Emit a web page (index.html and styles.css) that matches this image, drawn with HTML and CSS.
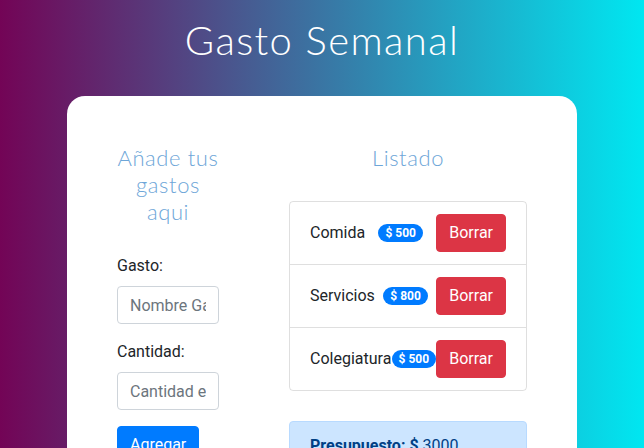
FILE: index.html
```html
<!DOCTYPE html>
<html lang="es">
<head>
<meta charset="utf-8">
<title>Gasto Semanal</title>
<link rel="stylesheet" href="styles.css">
</head>
<body>
<header class="top">
  <h1 class="title">Gasto Semanal</h1>
</header>
<main class="card">
  <div class="cols">
    <section class="form-col">
      <h2 class="sub">Añade tus gastos aqui</h2>
      <form class="form">
        <div class="group">
          <label class="label" for="gasto">Gasto:</label>
          <input class="control" id="gasto" type="text" placeholder="Nombre Gasto">
        </div>
        <div class="group">
          <label class="label" for="cantidad">Cantidad:</label>
          <input class="control" id="cantidad" type="text" placeholder="Cantidad en $">
        </div>
        <button class="btn btn-primary" type="button">Agregar</button>
      </form>
    </section>
    <section class="list-col">
      <h2 class="sub sub-list">Listado</h2>
      <ul class="list">
        <li class="item"><span class="name">Comida</span><span class="badge">$ 500</span><button class="btn btn-danger" type="button">Borrar</button></li>
        <li class="item"><span class="name">Servicios</span><span class="badge">$ 800</span><button class="btn btn-danger" type="button">Borrar</button></li>
        <li class="item"><span class="name">Colegiatura</span><span class="badge">$ 500</span><button class="btn btn-danger" type="button">Borrar</button></li>
      </ul>
      <div class="alert"><strong>Presupuesto: $</strong> 3000</div>
    </section>
  </div>
</main>
</body>
</html>
```

FILE: styles.css
```css
* { box-sizing: border-box; }

html, body { height: 100%; }

body {
  margin: 0;
  font-family: Roboto, "Liberation Sans", sans-serif;
  font-size: 16px;
  line-height: 1.5;
  color: #212529;
  background: linear-gradient(to right, #730456, #00e7f1);
  overflow: hidden;
}

.top {
  padding-top: 16px;
  margin-bottom: 32px;
  text-align: center;
}

.title {
  margin: 0;
  font-family: Lato, sans-serif;
  font-weight: 300;
  font-size: 40px;
  line-height: 48px;
  letter-spacing: 1.4px;
  color: #fff;
}

.card {
  width: 510px;
  margin: 0 auto;
  background: #fff;
  border-radius: 18px;
  padding: 48px 50px 40px;
  min-height: 400px;
}

.cols {
  display: flex;
  gap: 70px;
}

.form-col { width: 102px; flex: none; }
.list-col { width: 238px; flex: none; }

.sub {
  margin: 0 0 29px;
  font-family: Lato, sans-serif;
  font-weight: 300;
  font-size: 22px;
  line-height: 27px;
  letter-spacing: 0.6px;
  color: #6ea6d8;
  text-align: center;
}

.sub-list { margin-bottom: 30px; }

.group { margin-bottom: 16px; }

.label {
  display: block;
  margin-bottom: 8px;
}

.control {
  display: block;
  width: 100%;
  height: 38px;
  padding: 6px 12px;
  font: inherit;
  color: #495057;
  background: #fff;
  border: 1px solid #ced4da;
  border-radius: 4px;
}

.control::placeholder { color: #6c757d; }

.btn {
  display: inline-block;
  padding: 6px 12px;
  font: inherit;
  line-height: 24px;
  color: #fff;
  border: 1px solid transparent;
  border-radius: 4px;
}

.btn-primary { background: #007bff; border-color: #007bff; }
.btn-danger { background: #dc3545; border-color: #dc3545; }

.list {
  margin: 0 0 30px;
  padding: 0;
  list-style: none;
  border: 1px solid rgba(0,0,0,.125);
  border-radius: 4px;
}

.item {
  display: flex;
  align-items: center;
  justify-content: space-between;
  padding: 12px 20px;
}

.item + .item { border-top: 1px solid rgba(0,0,0,.125); }

.badge {
  display: inline-block;
  padding: 3px 7px;
  font-size: 12px;
  font-weight: 700;
  line-height: 12px;
  color: #fff;
  background: #007bff;
  border-radius: 10rem;
}

.alert {
  padding: 12px 20px;
  color: #004085;
  background: #cce5ff;
  border: 1px solid #b8daff;
  border-radius: 4px;
}
```
